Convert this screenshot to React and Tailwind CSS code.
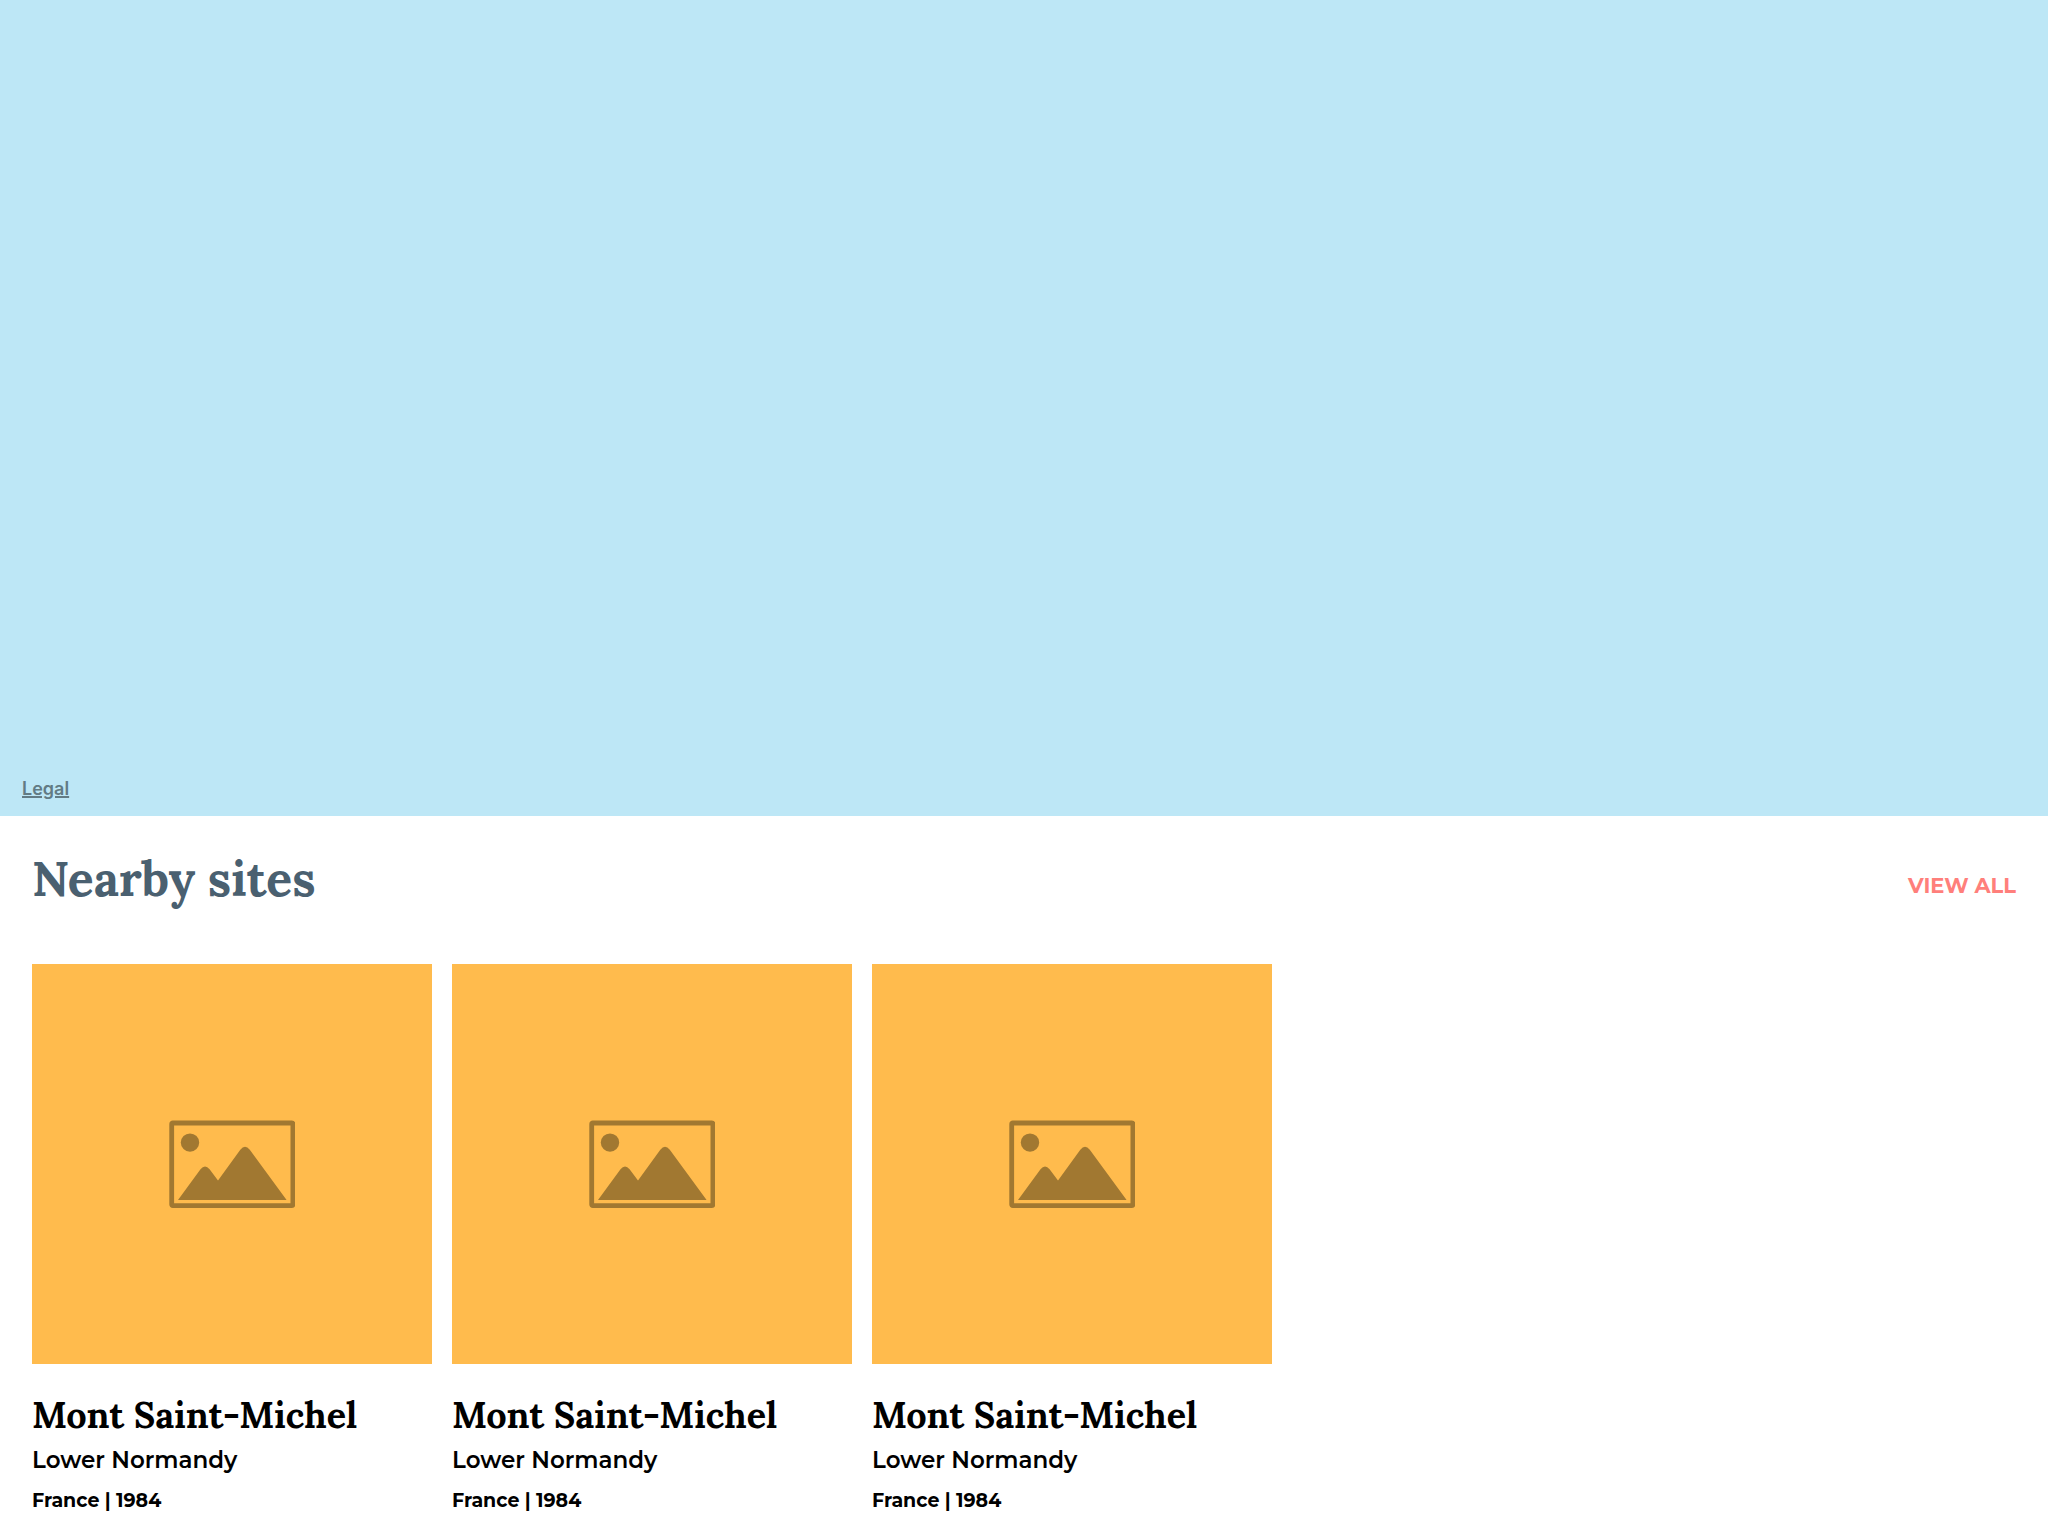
const sites = [
  { id: 1, name: "Mont Saint-Michel", region: "Lower Normandy", detail: "France | 1984" },
  { id: 2, name: "Mont Saint-Michel", region: "Lower Normandy", detail: "France | 1984" },
  { id: 3, name: "Mont Saint-Michel", region: "Lower Normandy", detail: "France | 1984" },
];

function PlaceholderIcon() {
  return (
    <svg className="h-[88px] w-[126px] text-[#a17831]" viewBox="0 0 126 88" fill="currentColor" aria-hidden="true">
      <rect x="2.7" y="3" width="121.2" height="82.6" rx="1" fill="none" stroke="currentColor" strokeWidth="4.8" />
      <circle cx="21" cy="22.6" r="9.2" />
      <path d="M9 80 L31.5 49.2 Q36 43.6 40.6 49.2 L49 60.6 L71.3 29.8 Q76 23.6 80.8 29.8 L117.6 80 Z" />
    </svg>
  );
}

function SiteCard({ site }) {
  return (
    <article className="w-[400px] shrink-0">
      <div className="flex aspect-square items-center justify-center bg-[#ffbb4d]">
        <PlaceholderIcon />
      </div>
      <h3 className="mt-7 font-['Lora','Liberation_Serif',serif] text-4xl leading-[46px] font-bold">{site.name}</h3>
      <p className="mt-1.5 font-['Montserrat','Inter',sans-serif] text-[23px] leading-8 font-semibold">{site.region}</p>
      <p className="mt-2 font-['Montserrat','Inter',sans-serif] text-[19px] leading-[34px] font-bold">{site.detail}</p>
    </article>
  );
}

export default function App() {
  return (
    <main className="min-h-screen bg-white text-black">
      <section aria-label="Map" className="flex h-[816px] items-end bg-[#bde7f6] px-[22px] pb-[15px]">
        <a
          href="#legal"
          className="font-['Inter',sans-serif] text-[18px] leading-6 font-semibold text-[#627b84] underline decoration-2 underline-offset-1"
        >
          Legal
        </a>
      </section>
      <section className="px-8 pt-8">
        <header className="flex items-end justify-between">
          <h2 className="font-['Lora','Liberation_Serif',serif] text-5xl leading-[62px] font-bold text-[#4a6070]">Nearby sites</h2>
          <button type="button" className="mb-2 font-['Montserrat','Inter',sans-serif] text-[21px] leading-8 font-bold text-[#ff7f7b]">
            VIEW ALL
          </button>
        </header>
        <div className="mt-[54px] flex gap-5">
          {sites.map((site) => (
            <SiteCard key={site.id} site={site} />
          ))}
        </div>
      </section>
    </main>
  );
}
